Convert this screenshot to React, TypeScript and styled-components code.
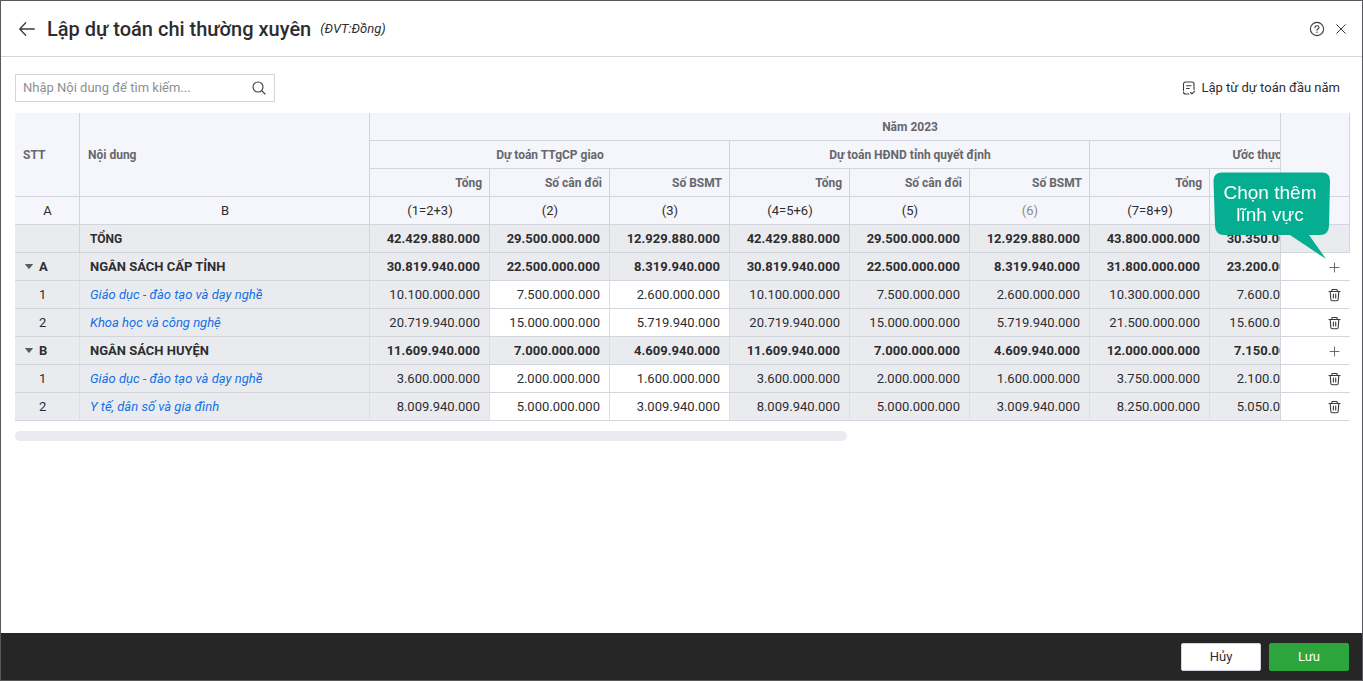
import React from "react";
import styled, { createGlobalStyle, css } from "styled-components";

const line = "#d3d5dc";
const ink = "#2d2d30";

const GlobalStyle = createGlobalStyle`
  *, *::before, *::after { box-sizing: border-box; }
  body {
    margin: 0;
    font-family: Roboto, "Liberation Sans", sans-serif;
    font-size: 13px;
    line-height: 20px;
    color: ${ink};
    background: #fff;
  }
  button, input { font: inherit; color: inherit; }
`;

const Frame = styled.div`
  display: flex;
  flex-direction: column;
  min-height: 100vh;
  border: 1px solid #58585a;
`;

const Header = styled.header`
  display: flex;
  align-items: center;
  height: 56px;
  padding: 0 11px 0 16px;
  border-bottom: 1px solid #d4d4df;
`;

const Title = styled.h1`
  margin: 0 0 0 10px;
  font-size: 20px;
  line-height: 28px;
  font-weight: 500;
`;

const Unit = styled.span`
  margin-left: 9px;
  font-style: italic;
`;

const HeaderActions = styled.div`
  display: flex;
  gap: 4px;
  margin-left: auto;
`;

const IconButton = styled.button`
  display: flex;
  align-items: center;
  justify-content: center;
  width: 20px;
  height: 20px;
  padding: 0;
  border: 0;
  background: none;
  cursor: pointer;
`;

const Main = styled.main`
  flex: 1;
  padding: 17px 12px 20px 14px;
`;

const Toolbar = styled.div`
  display: flex;
  align-items: center;
  justify-content: space-between;
  margin-bottom: 11px;
`;

const SearchBox = styled.label`
  display: flex;
  align-items: center;
  width: 260px;
  height: 28px;
  padding: 0 5px 0 7px;
  border: 1px solid #d4d4df;
`;

const SearchInput = styled.input`
  flex: 1;
  min-width: 0;
  padding: 0;
  border: 0;
  outline: 0;
  background: none;
  &::placeholder { color: #8f8f92; opacity: 1; }
`;

const ToolbarButton = styled.button`
  display: flex;
  align-items: center;
  gap: 4px;
  height: 28px;
  padding: 0 10px 0 0;
  border: 0;
  background: none;
  cursor: pointer;
`;

const Scroller = styled.div`
  overflow-x: auto;
  scrollbar-width: none;
`;

const Table = styled.table`
  table-layout: fixed;
  width: 1505px;
  min-width: 100%;
  border-collapse: separate;
  border-spacing: 0;
`;

const Col = styled.col<{ $w: number }>`
  width: ${(p) => p.$w}px;
`;

type Align = "left" | "center" | "right";

const cellBase = css`
  height: 28px;
  padding: 0 7px 0 8px;
  border: solid ${line};
  border-width: 0 1px 1px 0;
  white-space: nowrap;
`;

const HeadCell = styled.th<{ $align?: Align }>`
  ${cellBase}
  background: #f5f6fb;
  color: #66676b;
  font-size: 12px;
  font-weight: 700;
  text-align: ${(p) => p.$align ?? "left"};
`;

const IndexCell = styled.td<{ $muted?: boolean }>`
  ${cellBase}
  background: #f5f6fb;
  color: ${(p) => (p.$muted ? "#8a8a8e" : ink)};
  text-align: center;
`;

const BodyCell = styled.td<{ $strong?: boolean; $editable?: boolean; $align?: Align; $small?: boolean; $total?: boolean }>`
  ${cellBase}
  padding: 0 9px 0 10px;
  border-right-color: ${(p) => (p.$total ? line : "#dddee4")};
  background: ${(p) => (p.$editable ? "#fff" : "#eaebef")};
  font-size: ${(p) => (p.$small ? 12 : 13)}px;
  font-weight: ${(p) => (p.$strong ? 700 : 400)};
  text-align: ${(p) => p.$align ?? "left"};
`;

const frozen = css`
  position: sticky;
  right: 0;
  border-left: 1px solid ${line};
`;

const FrozenHead = styled(HeadCell)`${frozen}`;
const FrozenIndex = styled(IndexCell)`${frozen}`;
const FrozenTotal = styled(BodyCell)`${frozen}`;
const FrozenCell = styled(BodyCell)`
  ${frozen}
  border-right: 0;
  background: #fff;
`;

const RowAction = styled(IconButton)`
  margin-left: auto;
  margin-right: -4px;
`;

const Order = styled.div<{ $nested?: boolean }>`
  display: flex;
  align-items: center;
  gap: 6px;
  padding-left: ${(p) => (p.$nested ? 14 : 0)}px;
`;

const Toggle = styled.button`
  display: flex;
  width: 8px;
  padding: 0;
  border: 0;
  background: none;
  cursor: pointer;
`;

const FieldLink = styled.a`
  color: #1270e6;
  font-style: italic;
  text-decoration: none;
`;

const ScrollTrack = styled.div`
  margin-top: 10px;
`;

const ScrollThumb = styled.div`
  width: 62.3%;
  height: 10px;
  border-radius: 5px;
  background: #eaebef;
`;

const Callout = styled.div`
  position: absolute;
  right: 19px;
  bottom: 20px;
  width: 118px;
  height: 88px;
  padding: 10px 4px 0 0;
  color: #fff;
  font-family: "Liberation Sans", Arial, sans-serif;
  font-size: 19px;
  font-weight: 400;
  line-height: 22px;
  text-align: center;
  white-space: normal;
  pointer-events: none;
`;

const CalloutShape = styled.svg`
  position: absolute;
  inset: 0;
`;

const CalloutText = styled.span`
  position: relative;
  display: block;
`;

const Footer = styled.footer`
  display: flex;
  align-items: center;
  justify-content: flex-end;
  gap: 8px;
  height: 47px;
  padding: 0 13px;
  background: #262626;
`;

const FooterButton = styled.button<{ $primary?: boolean }>`
  width: 80px;
  height: 28px;
  padding: 0;
  border: 1px solid ${(p) => (p.$primary ? "#2ca53d" : "#d4d4df")};
  border-radius: 2px;
  background: ${(p) => (p.$primary ? "#2ca53d" : "#fff")};
  color: ${(p) => (p.$primary ? "#fff" : ink)};
  cursor: pointer;
`;

const Glyph = ({ d, size = 16, width = 1.1, color = "#3a3a3d" }: { d: string; size?: number; width?: number; color?: string }) => (
  <svg width={size} height={size} viewBox={`0 0 ${size} ${size}`} fill="none" stroke={color} strokeWidth={width} strokeLinecap="round" strokeLinejoin="round" aria-hidden="true">
    <path d={d} />
  </svg>
);

const BackIcon = () => <Glyph size={20} width={1.3} d="M2.7 10H17.3M8.7 3.8L2.7 10l6 6.2" />;
const HelpIcon = () => (
  <svg width="16" height="16" viewBox="0 0 16 16" fill="none" stroke="#3a3a3d" strokeWidth="1.1" aria-hidden="true">
    <circle cx="8" cy="8" r="6.6" />
    <path d="M6 6.6c0-1.2.9-1.9 2-1.9s2 .7 2 1.7c0 1.3-2 1.4-2 2.8" strokeLinecap="round" />
    <circle cx="8" cy="11.2" r=".7" fill="#3a3a3d" stroke="none" />
  </svg>
);
const CloseIcon = () => <Glyph width={1} d="M3.7 3.7l8.6 8.6M12.3 3.7l-8.6 8.6" />;
const SearchIcon = () => <Glyph d="M12 7a5 5 0 1 1-10 0 5 5 0 0 1 10 0zM10.7 10.6L14 14" />;
const PlanIcon = () => <Glyph d="M8 14H4.5a2 2 0 0 1-2-2M2.5 10.5V4a2 2 0 0 1 2-2H11a2 2 0 0 1 2 2v5.5M5.5 5.8h4.5M5.5 8.5h2.8M9.6 12.5l1.4 1.4 2.6-2.8" />;
const PlusIcon = () => <Glyph color="#6c6c70" d="M3 8.5h9M7.5 4v9" width={1} />;
const TrashIcon = () => <Glyph d="M2 4.5h11M4.8 4.5V3.3q0-.8.8-.8h3.8q.8 0 .8.8v1.2M3.2 4.5l.6 7.8q.1 1.5 1.5 1.5h4.4q1.4 0 1.5-1.5l.6-7.8M6.4 7v4M8.7 7v4" />;
const CaretIcon = () => (
  <svg width="8" height="5" viewBox="0 0 8 5" fill="#5c5c60" aria-hidden="true">
    <path d="M.5 0h7q.5 0 .3.5L4.6 4.5q-.6.6-1.2 0L.2.5Q0 0 .5 0z" />
  </svg>
);

const groups = ["Dự toán TTgCP giao", "Dự toán HĐND tỉnh quyết định", "Ước thực hiện"];
const measures = ["Tổng", "Số cân đối", "Số BSMT"];
const formulas = ["(1=2+3)", "(2)", "(3)", "(4=5+6)", "(5)", "(6)", "(7=8+9)", "(8)", "(9)"];

type Row = { kind: "total" | "group" | "item"; order: string; name: string; values: string[] };

const rows: Row[] = [
  { kind: "total", order: "", name: "TỔNG", values: ["42.429.880.000", "29.500.000.000", "12.929.880.000", "42.429.880.000", "29.500.000.000", "12.929.880.000", "43.800.000.000", "30.350.000.000", "13.450.000.000"] },
  { kind: "group", order: "A", name: "NGÂN SÁCH CẤP TỈNH", values: ["30.819.940.000", "22.500.000.000", "8.319.940.000", "30.819.940.000", "22.500.000.000", "8.319.940.000", "31.800.000.000", "23.200.000.000", "8.600.000.000"] },
  { kind: "item", order: "1", name: "Giáo dục - đào tạo và dạy nghề", values: ["10.100.000.000", "7.500.000.000", "2.600.000.000", "10.100.000.000", "7.500.000.000", "2.600.000.000", "10.300.000.000", "7.600.000.000", "2.700.000.000"] },
  { kind: "item", order: "2", name: "Khoa học và công nghệ", values: ["20.719.940.000", "15.000.000.000", "5.719.940.000", "20.719.940.000", "15.000.000.000", "5.719.940.000", "21.500.000.000", "15.600.000.000", "5.900.000.000"] },
  { kind: "group", order: "B", name: "NGÂN SÁCH HUYỆN", values: ["11.609.940.000", "7.000.000.000", "4.609.940.000", "11.609.940.000", "7.000.000.000", "4.609.940.000", "12.000.000.000", "7.150.000.000", "4.850.000.000"] },
  { kind: "item", order: "1", name: "Giáo dục - đào tạo và dạy nghề", values: ["3.600.000.000", "2.000.000.000", "1.600.000.000", "3.600.000.000", "2.000.000.000", "1.600.000.000", "3.750.000.000", "2.100.000.000", "1.650.000.000"] },
  { kind: "item", order: "2", name: "Y tế, dân số và gia đình", values: ["8.009.940.000", "5.000.000.000", "3.009.940.000", "8.009.940.000", "5.000.000.000", "3.009.940.000", "8.250.000.000", "5.050.000.000", "3.200.000.000"] },
];

const AddFieldHint = () => (
  <Callout role="tooltip">
    <CalloutShape width="118" height="88" viewBox="0 0 118 88" aria-hidden="true">
      <path fill="#06ae91" d="M9 0.5H109Q117.3 0.5 117 9L116 54Q115.5 63 107 63H96L113 87L77 63H11Q2.5 63 2 54L.5 9Q.3.5 9 .5z" />
    </CalloutShape>
    <CalloutText>Chọn thêm lĩnh vực</CalloutText>
  </Callout>
);

const DataRow = ({ row, hint }: { row: Row; hint?: boolean }) => {
  const strong = row.kind !== "item";
  const total = row.kind === "total";
  return (
    <tr>
      <BodyCell $strong={strong} $total={total}>
        <Order $nested={row.kind === "item"}>
          {row.kind === "group" && <Toggle aria-label={`Thu gọn ${row.name}`}><CaretIcon /></Toggle>}
          {row.order}
        </Order>
      </BodyCell>
      <BodyCell $strong={strong} $small={total} $total={total}>
        {row.kind === "item" ? <FieldLink href="#">{row.name}</FieldLink> : row.name}
      </BodyCell>
      {row.values.map((value, i) => (
        <BodyCell key={i} $align="right" $strong={strong} $total={total} $editable={row.kind === "item" && (i === 1 || i === 2)}>
          {value}
        </BodyCell>
      ))}
      {total ? (
        <FrozenTotal $total />
      ) : (
        <FrozenCell>
          <RowAction aria-label={row.kind === "group" ? "Thêm lĩnh vực" : "Xóa"}>
            {row.kind === "group" ? <PlusIcon /> : <TrashIcon />}
          </RowAction>
          {hint && <AddFieldHint />}
        </FrozenCell>
      )}
    </tr>
  );
};

export default function App() {
  return (
    <>
      <GlobalStyle />
      <Frame>
        <Header>
          <IconButton aria-label="Quay lại"><BackIcon /></IconButton>
          <Title>Lập dự toán chi thường xuyên</Title>
          <Unit>(ĐVT:Đồng)</Unit>
          <HeaderActions>
            <IconButton aria-label="Trợ giúp"><HelpIcon /></IconButton>
            <IconButton aria-label="Đóng"><CloseIcon /></IconButton>
          </HeaderActions>
        </Header>
        <Main>
          <Toolbar>
            <SearchBox>
              <SearchInput type="text" aria-label="Tìm kiếm" placeholder="Nhập Nội dung để tìm kiếm..." />
              <IconButton aria-label="Tìm"><SearchIcon /></IconButton>
            </SearchBox>
            <ToolbarButton><PlanIcon />Lập từ dự toán đầu năm</ToolbarButton>
          </Toolbar>
          <Scroller>
            <Table>
              <colgroup>
                <Col $w={65} />
                <Col $w={290} />
                {formulas.map((f) => <Col key={f} $w={120} />)}
                <Col $w={70} />
              </colgroup>
              <thead>
                <tr>
                  <HeadCell rowSpan={3}>STT</HeadCell>
                  <HeadCell rowSpan={3}>Nội dung</HeadCell>
                  <HeadCell colSpan={9} $align="center">Năm 2023</HeadCell>
                  <FrozenHead rowSpan={3} />
                </tr>
                <tr>
                  {groups.map((g) => <HeadCell key={g} colSpan={3} $align="center">{g}</HeadCell>)}
                </tr>
                <tr>
                  {groups.flatMap((g) => measures.map((m) => <HeadCell key={g + m} $align="right">{m}</HeadCell>))}
                </tr>
                <tr>
                  <IndexCell>A</IndexCell>
                  <IndexCell>B</IndexCell>
                  {formulas.map((f) => <IndexCell key={f} $muted={f === "(6)"}>{f}</IndexCell>)}
                  <FrozenIndex />
                </tr>
              </thead>
              <tbody>
                {rows.map((row, i) => <DataRow key={i} row={row} hint={i === 1} />)}
              </tbody>
            </Table>
          </Scroller>
          <ScrollTrack><ScrollThumb /></ScrollTrack>
        </Main>
        <Footer>
          <FooterButton>Hủy</FooterButton>
          <FooterButton $primary>Lưu</FooterButton>
        </Footer>
      </Frame>
    </>
  );
}
